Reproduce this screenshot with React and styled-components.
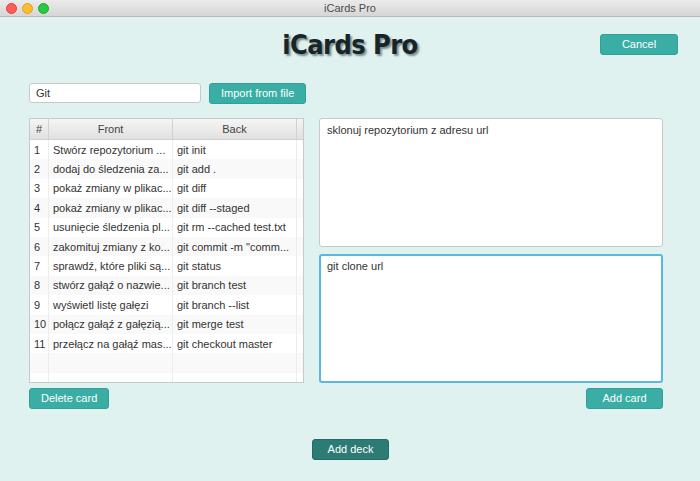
import React from 'react'
import styled, { createGlobalStyle } from 'styled-components'

const GlobalStyle = createGlobalStyle`
    html, body {
        margin: 0;
        padding: 0;
        background: #dff2f0;
    }
    body {
        font-family: "Liberation Sans", Arial, sans-serif;
        font-size: 11px;
        color: #333;
    }
`

const cards = [
    ['Stwórz repozytorium ...', 'git init'],
    ['dodaj do śledzenia za...', 'git add .'],
    ['pokaż zmiany w plikac...', 'git diff'],
    ['pokaż zmiany w plikac...', 'git diff --staged'],
    ['usunięcie śledzenia pl...', 'git rm --cached test.txt'],
    ['zakomituj zmiany z ko...', 'git commit -m "comm...'],
    ['sprawdź, które pliki są...', 'git status'],
    ['stwórz gałąź o nazwie...', 'git branch test'],
    ['wyświetl listę gałęzi', 'git branch --list'],
    ['połącz gałąź z gałęzią...', 'git merge test'],
    ['przełącz na gałąź mas...', 'git checkout master'],
]

function App() {
    return (
        <Window>
            <GlobalStyle />
            <TitleBar>
                <Lights>
                    <Light color="#fc5f57" border="#e0443e" />
                    <Light color="#fdbc2e" border="#dea123" />
                    <Light color="#28c840" border="#1aab29" />
                </Lights>
                <WindowTitle>iCards Pro</WindowTitle>
            </TitleBar>

            <Header>
                <span />
                <Logo>iCards Pro</Logo>
                <Button right>Cancel</Button>
            </Header>

            <Main>
                <SearchRow>
                    <TextField defaultValue="Git" />
                    <Button>Import from file</Button>
                </SearchRow>

                <Table>
                    <HeadRow>
                        <HeadCell>#</HeadCell>
                        <HeadCell>Front</HeadCell>
                        <HeadCell>Back</HeadCell>
                        <HeadCell />
                    </HeadRow>
                    {cards.map((c, i) => (
                        <Row key={i} odd={i % 2 === 1}>
                            <Cell>{i + 1}</Cell>
                            <Cell>{c[0]}</Cell>
                            <Cell>{c[1]}</Cell>
                            <Cell />
                        </Row>
                    ))}
                    <Row odd>
                        <Cell /><Cell /><Cell /><Cell />
                    </Row>
                    <Row>
                        <Cell /><Cell /><Cell /><Cell />
                    </Row>
                </Table>

                <Editors>
                    <TextArea defaultValue="sklonuj repozytorium z adresu url" />
                    <TextArea focused defaultValue="git clone url" />
                </Editors>

                <ActionRow>
                    <Button>Delete card</Button>
                </ActionRow>
                <ActionRow end>
                    <Button>Add card</Button>
                </ActionRow>
            </Main>

            <Footer>
                <Button dark>Add deck</Button>
            </Footer>
        </Window>
    )
}

export default App

const Window = styled.div`
    width: 700px;
    height: 481px;
    overflow: hidden;
    background: #dff2f0;
    display: flex;
    flex-direction: column;
`

const TitleBar = styled.div`
    position: relative;
    height: 16px;
    flex-shrink: 0;
    background: linear-gradient(#ebebeb, #d6d6d6);
    border-bottom: 1px solid #b9b9b9;
    display: flex;
    align-items: center;
    justify-content: center;
`

const Lights = styled.div`
    position: absolute;
    left: 6px;
    top: 3px;
    display: flex;
    gap: 5px;
`

const Light = styled.span`
    width: 9px;
    height: 9px;
    border-radius: 50%;
    background: ${p => p.color};
    border: 0.5px solid ${p => p.border};
`

const WindowTitle = styled.div`
    font-size: 11px;
    color: #4d4d4d;
`

const Header = styled.div`
    display: grid;
    grid-template-columns: 1fr auto 1fr;
    align-items: center;
    padding: 15px 22px 0 22px;
    height: 25px;
`

const Logo = styled.h1`
    margin: 0;
    font-family: "DejaVu Sans Condensed", "DejaVu Sans", sans-serif;
    font-weight: bold;
    font-size: 27px;
    line-height: 25px;
    color: #17252b;
    text-shadow: 2px 2px 2px rgba(40, 60, 60, 0.55);
    letter-spacing: -0.6px;
`

const Button = styled.button`
    justify-self: ${p => (p.right ? 'end' : 'auto')};
    height: 21px;
    padding: 0 11px;
    border: 1px solid ${p => (p.dark ? '#246b64' : '#33a098')};
    border-radius: 3px;
    background: ${p => (p.dark ? '#2c7b74' : '#3aaea5')};
    color: #fff;
    font-family: "Liberation Sans", Arial, sans-serif;
    font-size: 11px;
    line-height: 19px;
    cursor: pointer;
    min-width: ${p => (p.right ? '78px' : '77px')};
`

const Main = styled.div`
    display: grid;
    grid-template-columns: 275px 344px;
    grid-template-rows: auto auto auto;
    column-gap: 15px;
    padding: 0 37px 0 29px;
    margin-top: 26px;
`

const SearchRow = styled.div`
    grid-column: 1 / 3;
    display: flex;
    gap: 8px;
    margin-bottom: 14px;
`

const TextField = styled.input`
    box-sizing: border-box;
    width: 172px;
    height: 20px;
    border: 1px solid #c8c8c8;
    border-radius: 3px;
    background: #fff;
    padding: 0 6px;
    font-family: "Liberation Sans", Arial, sans-serif;
    font-size: 11px;
    color: #333;
    outline: none;
`

const Table = styled.div`
    box-sizing: border-box;
    height: 265px;
    border: 1px solid #c9c9c9;
    background: #fff;
    overflow: hidden;
    display: flex;
    flex-direction: column;
`

const columns = '19px 124px 124px 1fr'

const HeadRow = styled.div`
    display: grid;
    grid-template-columns: ${columns};
    height: 20px;
    flex-shrink: 0;
    background: linear-gradient(#f5f5f5, #e1e1e1);
    border-bottom: 1px solid #cfcfcf;
`

const HeadCell = styled.div`
    border-right: 1px solid #d2d2d2;
    display: flex;
    align-items: center;
    justify-content: center;
    color: #444;
    &:last-child { border-right: none; }
`

const Row = styled.div`
    display: grid;
    grid-template-columns: ${columns};
    height: 19.4px;
    flex-shrink: 0;
    background: ${p => (p.odd ? '#f9f9f9' : '#fff')};
`

const Cell = styled.div`
    border-right: 1px solid #ededed;
    padding: 0 4px;
    display: flex;
    align-items: center;
    white-space: nowrap;
    overflow: hidden;
    color: #333;
    &:last-child { border-right: none; }
`

const Editors = styled.div`
    display: flex;
    flex-direction: column;
    gap: 7px;
    height: 265px;
`

const TextArea = styled.textarea`
    flex: 1;
    box-sizing: border-box;
    resize: none;
    margin: 0;
    background: #fff;
    border: ${p => (p.focused ? '2px solid #56b9df' : '1px solid #c8c8c8')};
    border-radius: 3px;
    padding: ${p => (p.focused ? '4px 6px' : '5px 7px')};
    font-family: "Liberation Sans", Arial, sans-serif;
    font-size: 11px;
    color: #333;
    outline: none;
`

const ActionRow = styled.div`
    display: flex;
    justify-content: ${p => (p.end ? 'flex-end' : 'flex-start')};
    margin-top: 5px;
`

const Footer = styled.div`
    display: flex;
    justify-content: center;
    margin-top: 30px;
    padding-left: 1px;
`
